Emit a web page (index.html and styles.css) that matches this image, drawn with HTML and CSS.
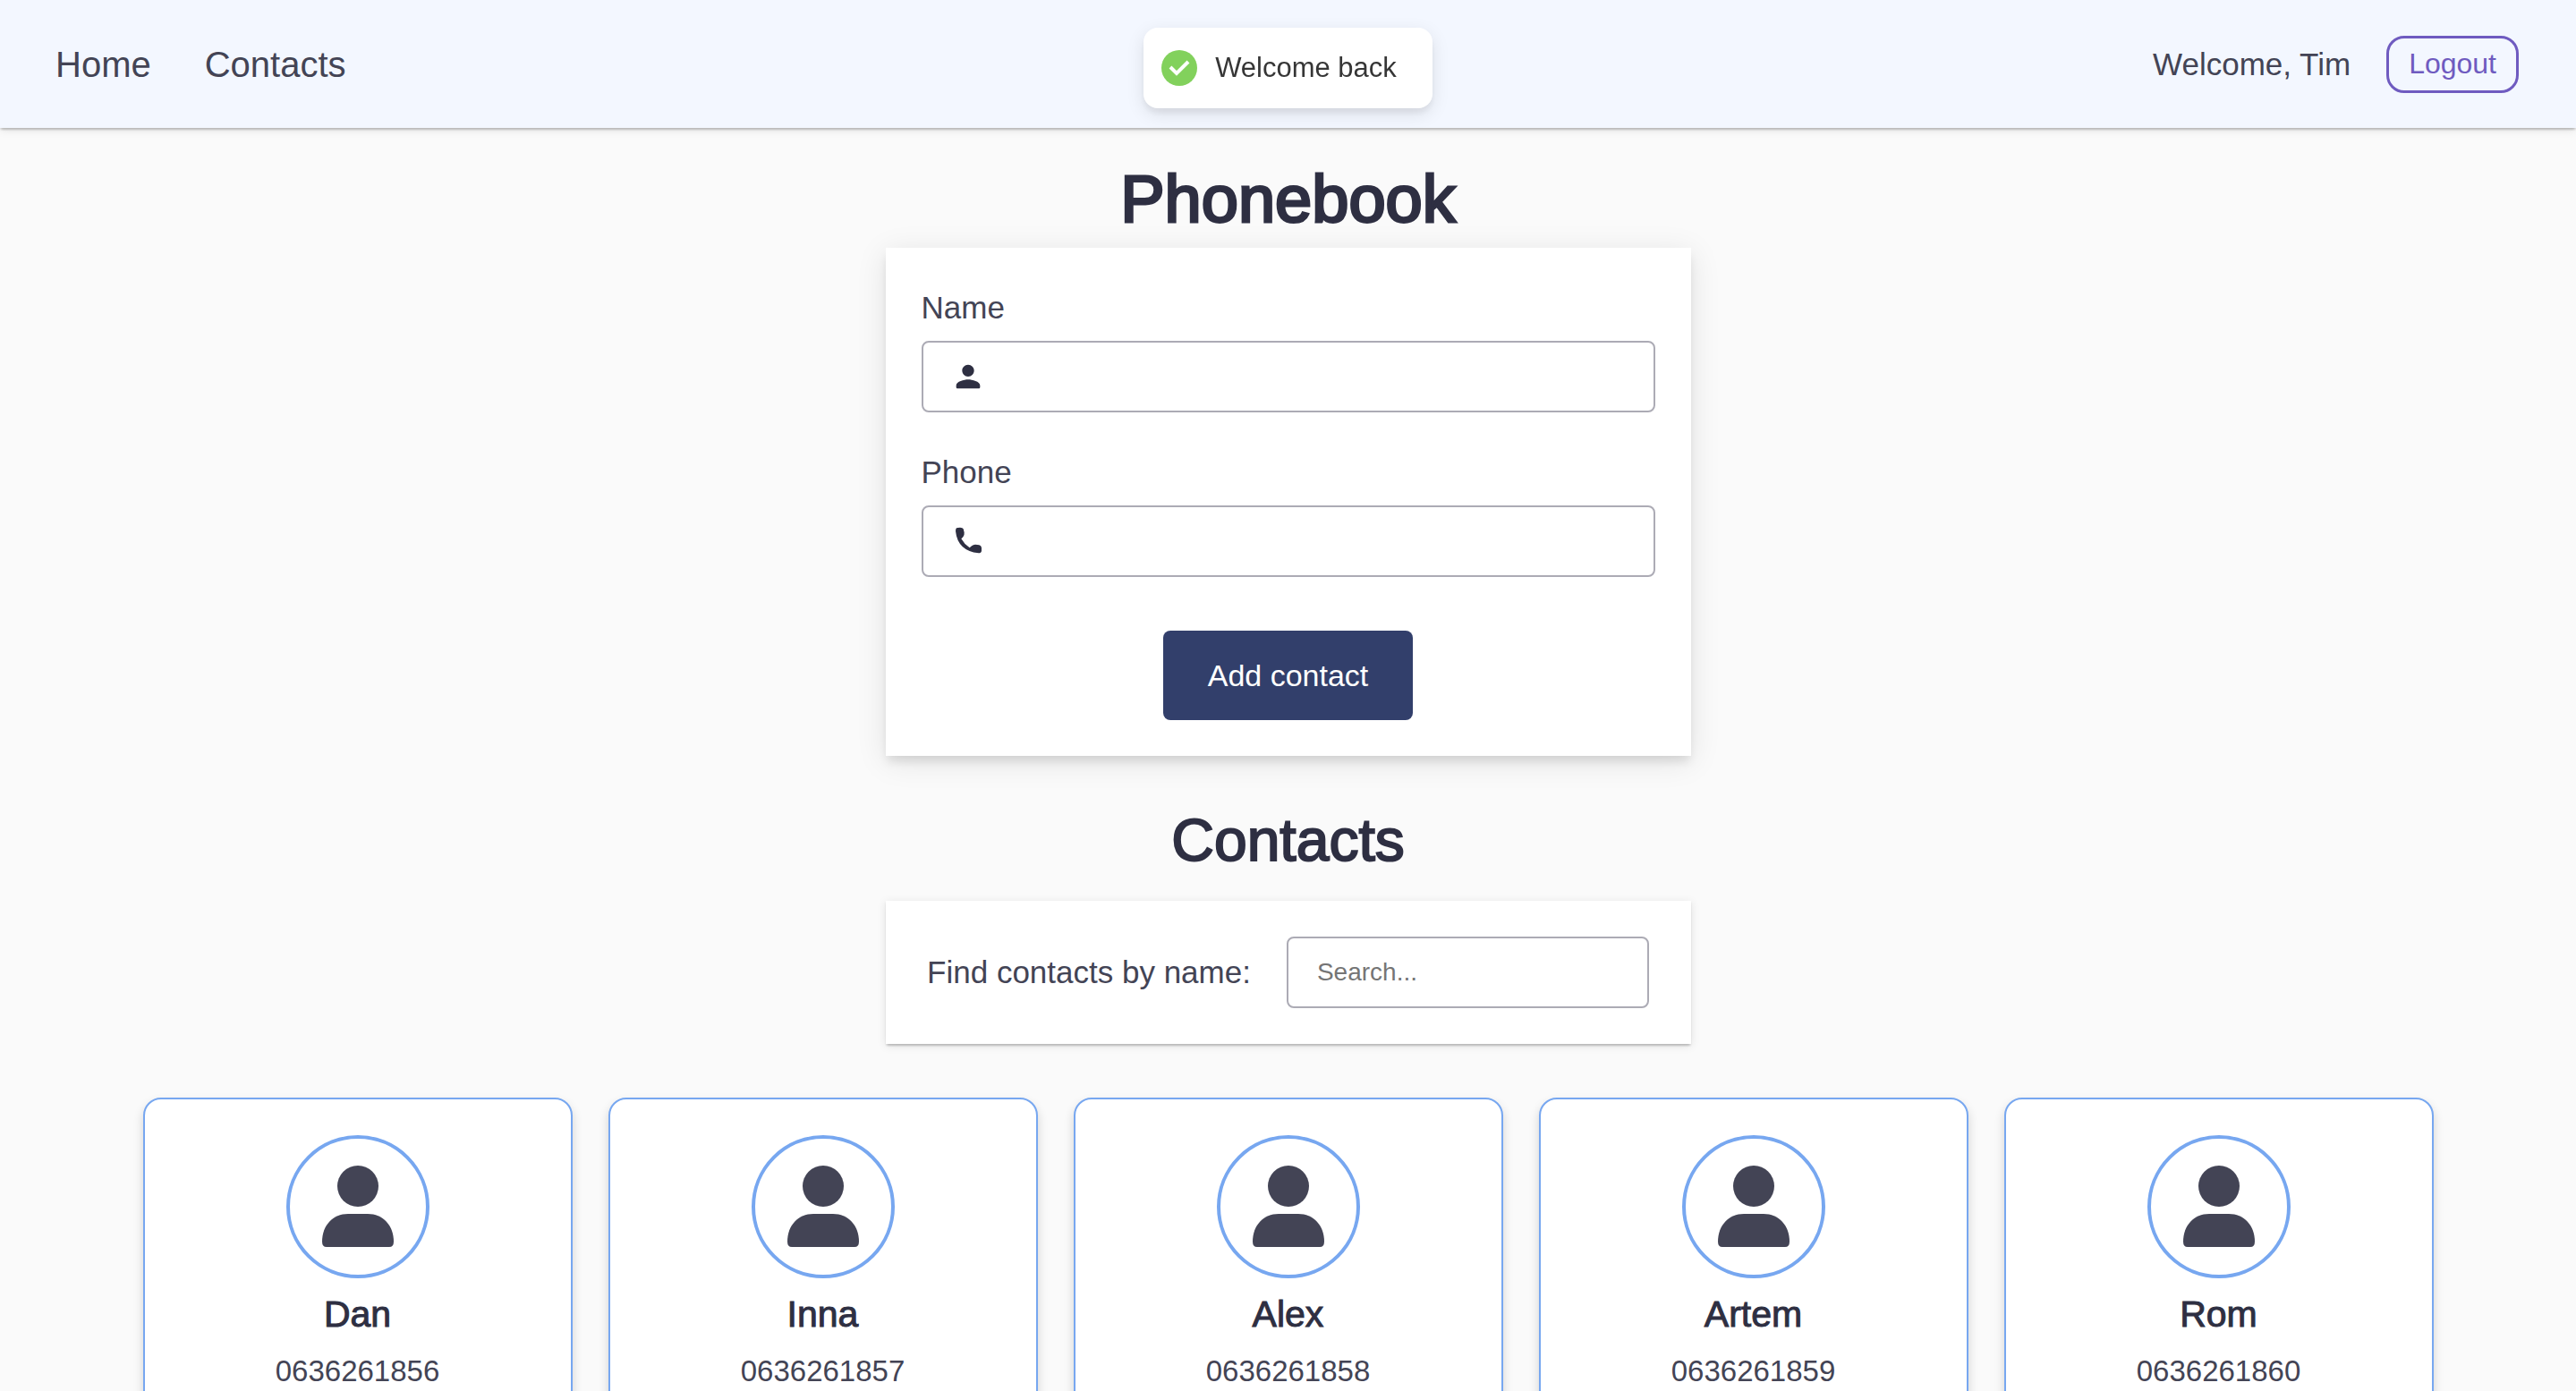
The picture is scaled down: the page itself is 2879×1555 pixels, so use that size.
FILE: index.html
```html
<!DOCTYPE html>
<html lang="en">
<head>
<meta charset="utf-8">
<meta name="viewport" content="width=device-width, initial-scale=1">
<title>Phonebook</title>
<link rel="stylesheet" href="styles.css">
</head>
<body>
<svg class="sprite" aria-hidden="true">
  <symbol id="avatar" viewBox="0 0 152 152">
    <circle cx="76" cy="53" r="23"/>
    <path d="M65 84H87C104 84 116 97 116 115Q116 121 111 121H41Q36 121 36 115C36 97 48 84 65 84Z"/>
  </symbol>
</svg>

<header class="header">
  <nav class="nav">
    <a class="nav-link" href="#home">Home</a>
    <a class="nav-link" href="#contacts">Contacts</a>
  </nav>
  <div class="user">
    <span class="user-name">Welcome, Tim</span>
    <button class="logout" type="button">Logout</button>
  </div>
</header>

<div class="toaster">
  <div class="toast" role="status">
    <svg class="toast-icon" viewBox="0 0 40 40" aria-hidden="true">
      <circle cx="20" cy="20" r="20" fill="#82d15c"/>
      <path d="M10 19L17 26L30 13" fill="none" stroke="#fff" stroke-width="4"/>
    </svg>
    <span>Welcome back</span>
  </div>
</div>

<main class="main">
  <h1 class="title">Phonebook</h1>
  <form class="panel contact-form">
    <div class="field">
      <label class="label" for="name">Name</label>
      <div class="control">
        <svg class="control-icon" viewBox="0 0 24 24" aria-hidden="true"><path d="M12 12c2.21 0 4-1.79 4-4s-1.79-4-4-4-4 1.79-4 4 1.79 4 4 4zm0 2c-2.67 0-8 1.34-8 4v1c0 .55.45 1 1 1h14c.55 0 1-.45 1-1v-1c0-2.66-5.33-4-8-4z"/></svg>
        <input class="input input-with-icon" id="name" type="text">
      </div>
    </div>
    <div class="field">
      <label class="label" for="phone">Phone</label>
      <div class="control">
        <svg class="control-icon" viewBox="275 974 120 120" aria-hidden="true"><path d="M296 990Q300 988 308 988Q317 988 319 993L322 1005Q323 1015 318 1020L312 1026Q322 1044 340 1056L347 1050Q352 1045 359 1045L372 1047Q379 1048 380 1056V1066Q379 1074 370 1074Q300 1066 293 1000Q293 992 296 990Z"/></svg>
        <input class="input input-with-icon" id="phone" type="tel">
      </div>
    </div>
    <button class="submit" type="submit">Add contact</button>
  </form>

  <h2 class="subtitle">Contacts</h2>
  <div class="panel filter">
    <label class="label" for="search">Find contacts by name:</label>
    <input class="input filter-input" id="search" type="text" placeholder="Search...">
  </div>

  <ul class="contacts">
    <li class="contact">
      <svg class="avatar" aria-hidden="true"><use href="#avatar"/></svg>
      <h3 class="contact-name">Dan</h3>
      <p class="contact-phone">0636261856</p>
    </li>
    <li class="contact">
      <svg class="avatar" aria-hidden="true"><use href="#avatar"/></svg>
      <h3 class="contact-name">Inna</h3>
      <p class="contact-phone">0636261857</p>
    </li>
    <li class="contact">
      <svg class="avatar" aria-hidden="true"><use href="#avatar"/></svg>
      <h3 class="contact-name">Alex</h3>
      <p class="contact-phone">0636261858</p>
    </li>
    <li class="contact">
      <svg class="avatar" aria-hidden="true"><use href="#avatar"/></svg>
      <h3 class="contact-name">Artem</h3>
      <p class="contact-phone">0636261859</p>
    </li>
    <li class="contact">
      <svg class="avatar" aria-hidden="true"><use href="#avatar"/></svg>
      <h3 class="contact-name">Rom</h3>
      <p class="contact-phone">0636261860</p>
    </li>
  </ul>
</main>
</body>
</html>
```
FILE: styles.css
```css
:root {
  --ink: #2e2f42;
  --text: #434455;
  --blue: #77a7f0;
  --violet: #6f5bc0;
}

* {
  box-sizing: border-box;
}

body {
  margin: 0;
  background: #fafafa;
  color: var(--text);
  font-family: "Liberation Sans", Arial, sans-serif;
}

h1,
h2,
h3,
p,
ul {
  margin: 0;
  padding: 0;
}

button,
input {
  font: inherit;
}

.sprite {
  display: none;
}

/* Header */
.header {
  display: flex;
  align-items: center;
  justify-content: space-between;
  height: 143px;
  padding: 0 64px 0 62px;
  background: #f3f7ff;
  box-shadow: 0 4px 2px -2px rgba(0, 0, 0, 0.12), 0 2px 2px rgba(0, 0, 0, 0.1), 0 2px 10px rgba(0, 0, 0, 0.1);
}

.nav {
  display: flex;
  gap: 60px;
}

.nav-link {
  color: inherit;
  font-size: 40px;
  line-height: 48px;
  text-decoration: none;
}

.user {
  display: flex;
  align-items: center;
  gap: 40px;
}

.user-name {
  font-size: 35px;
}

.logout {
  height: 64px;
  padding: 0 22px;
  border: 3px solid var(--violet);
  border-radius: 20px;
  background: transparent;
  color: var(--violet);
  font-size: 32px;
}

/* Notification */
.toaster {
  position: fixed;
  top: 31px;
  right: 0;
  left: 0;
  display: flex;
  justify-content: center;
  pointer-events: none;
}

.toast {
  display: flex;
  align-items: center;
  gap: 20px;
  height: 90px;
  padding: 0 40px 0 20px;
  border-radius: 16px;
  background: #fff;
  box-shadow: 0 6px 20px rgba(0, 0, 0, 0.1), 0 6px 6px rgba(0, 0, 0, 0.05);
  color: #363636;
  font-size: 31px;
}

.toast-icon {
  width: 40px;
  height: 40px;
}

/* Page */
.main {
  display: flex;
  flex-direction: column;
  align-items: center;
  padding: 40px 40px 60px;
}

/* Headings are drawn at a medium weight, between regular and bold */
.title,
.subtitle,
.contact-name {
  color: var(--ink);
  font-weight: 400;
}

.title {
  margin-bottom: 14px;
  font-size: 74px;
  line-height: 80px;
  -webkit-text-stroke: 3px var(--ink);
}

.subtitle {
  margin: 54px 0 28px;
  font-size: 66px;
  line-height: 80px;
  -webkit-text-stroke: 2px var(--ink);
}

.panel {
  width: 100%;
  max-width: 900px;
  padding: 40px;
  background: #fff;
}

.contact-form {
  display: flex;
  flex-direction: column;
  gap: 40px;
  box-shadow: 0 8px 10px -2px rgba(0, 0, 0, 0.1), 0 6px 32px rgba(0, 0, 0, 0.1);
}

.field {
  display: flex;
  flex-direction: column;
  gap: 10px;
}

.label {
  font-size: 35px;
  line-height: 54px;
}

.control {
  position: relative;
}

.control-icon {
  position: absolute;
  top: 20px;
  left: 32px;
  width: 40px;
  height: 40px;
  fill: var(--ink);
}

.input {
  display: block;
  width: 100%;
  height: 80px;
  padding: 0 32px;
  border: 2px solid #acabb5;
  border-radius: 8px;
  background: #fff;
  color: var(--text);
  font-size: 28px;
}

.input::placeholder {
  color: #757575;
}

.input-with-icon {
  padding-left: 88px;
}

.submit {
  align-self: center;
  height: 100px;
  margin-top: 20px;
  padding: 0 50px;
  border: 0;
  border-radius: 8px;
  background: #323f6b;
  color: #fff;
  font-size: 34px;
}

.filter {
  display: flex;
  align-items: center;
  justify-content: center;
  gap: 40px;
  box-shadow: 0 4px 2px -2px rgba(0, 0, 0, 0.12), 0 2px 2px rgba(0, 0, 0, 0.1), 0 2px 10px rgba(0, 0, 0, 0.1);
}

.filter-input {
  width: 405px;
}

/* Contact cards */
.contacts {
  display: grid;
  grid-template-columns: repeat(5, 1fr);
  gap: 40px;
  width: 100%;
  max-width: 2560px;
  margin-top: 60px;
  list-style: none;
}

.contact {
  display: flex;
  flex-direction: column;
  align-items: center;
  padding: 40px;
  border: 2px solid var(--blue);
  border-radius: 20px;
  background: #fff;
  box-shadow: 0 6px 12px rgba(0, 0, 0, 0.16);
}

.avatar {
  width: 160px;
  height: 160px;
  border: 4px solid var(--blue);
  border-radius: 50%;
  fill: var(--text);
}

.contact-name {
  margin: 16px 0 20px;
  font-size: 41px;
  line-height: 48px;
  -webkit-text-stroke: 1px var(--ink);
}

.contact-phone {
  font-size: 33px;
  line-height: 40px;
}
```
